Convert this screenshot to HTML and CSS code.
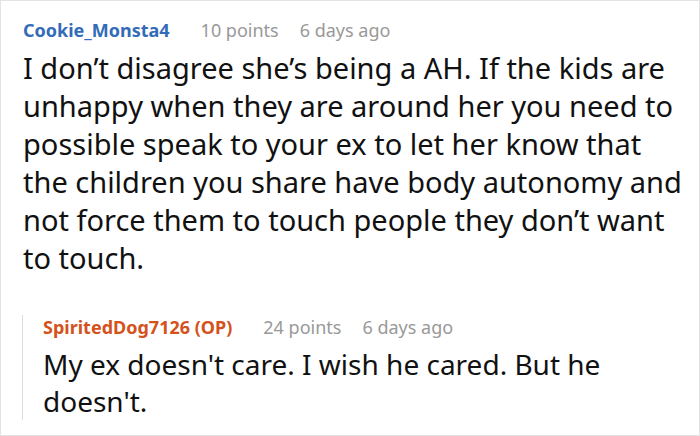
FILE: index.html
```html
<!DOCTYPE html>
<html>
<head>
<meta charset="utf-8">
<link rel="stylesheet" href="styles.css">
</head>
<body>
<div class="card">
  <div class="comment">
    <div class="meta">
      <span class="user">Cookie_Monsta4</span>
      <span class="info">10 points</span>
      <span class="info">6 days ago</span>
    </div>
    <p class="text">I don’t disagree she’s being a AH. If the kids are<br>unhappy when they are around her you need to<br>possible speak to your ex to let her know that<br>the children you share have body autonomy and<br>not force them to touch people they don’t want<br>to touch.</p>
  </div>
  <div class="reply">
    <div class="meta reply-meta">
      <span class="user op">SpiritedDog7126 (OP)</span>
      <span class="info">24 points</span>
      <span class="info">6 days ago</span>
    </div>
    <p class="text">My ex doesn't care. I wish he cared. But he<br>doesn't.</p>
  </div>
</div>
</body>
</html>
```

FILE: styles.css
```css
html, body {
  margin: 0;
  padding: 0;
  background: #ffffff;
}

.card {
  width: 700px;
  height: 436px;
  box-sizing: border-box;
  border: 1px solid #e3e3e3;
  padding: 17px 0 0 22px;
  font-family: "Noto Sans", "Open Sans", sans-serif;
  color: #111111;
  overflow: hidden;
}

.meta {
  display: flex;
  gap: 21px;
  font-size: 18px;
  line-height: 24px;
  white-space: nowrap;
}

.user {
  font-weight: 700;
  color: #336bb8;
  margin-right: 10px;
}

.user.op {
  color: #d4521c;
}

.info {
  color: #999999;
}

.text {
  margin: 7px 0 0;
  font-size: 29px;
  line-height: 38px;
  white-space: nowrap;
}

.reply {
  margin-top: 50px;
  border-left: 1px solid #dddddd;
  margin-left: -1px;
  padding-left: 20px;
}

.reply-meta {
  margin-top: -12px;
}

.reply .text {
  font-size: 28px;
  line-height: 37px;
}
```
